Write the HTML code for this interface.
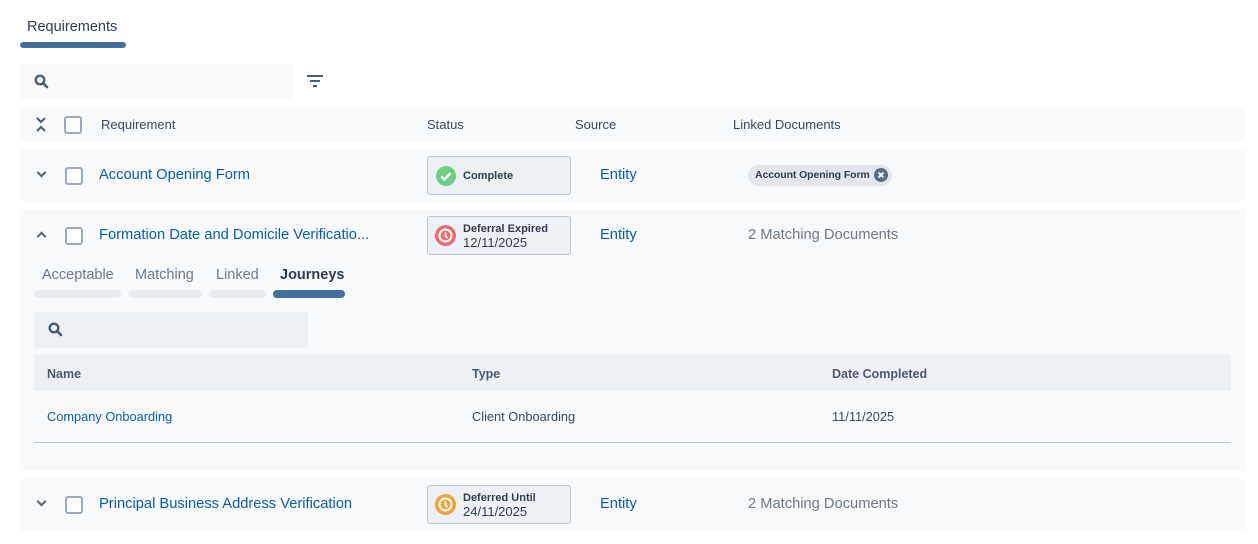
<!DOCTYPE html>
<html><head><style>
*{box-sizing:border-box;margin:0;padding:0}
body{width:1258px;height:544px;background:#fff;font-family:"Liberation Sans",sans-serif;position:relative;overflow:hidden;color:#3a4a5c}
.a{position:absolute}
.bg{background:#f7f9fb}
.link{color:#0a5cb0}
.cb{position:absolute;width:18px;height:18px;border:2px solid #9aaabb;border-radius:3px;background:#fff}
.st{position:absolute;left:427px;width:144px;height:39px;background:#edf1f5;border:1px solid #b9c6d4;border-radius:3px}
.chev{position:absolute;width:7px;height:7px;border-right:2px solid #556677;border-bottom:2px solid #556677}
</style></head><body>
<div class="a" style="left:27px;top:19px;font-size:14.5px;color:#2e3e50">Requirements</div>
<div class="a" style="left:20px;top:42px;width:106px;height:6px;border-radius:3px;background:#44709f"></div>

<div class="a bg" style="left:20px;top:64px;width:273px;height:35px;border-radius:3px"></div>
<svg class="a" style="left:34px;top:74px" width="15" height="15" viewBox="0 0 15 15"><circle cx="6" cy="6" r="4.3" fill="none" stroke="#485e78" stroke-width="2.4"/><path d="M9 9l4 4" stroke="#485e78" stroke-width="2.6" stroke-linecap="round"/></svg>
<svg class="a" style="left:306px;top:74px" width="18" height="14"><path d="M1 2h16M4 7h10M7 12h4" stroke="#485e78" stroke-width="2"/></svg>

<div class="a bg" style="left:20px;top:107px;width:1225px;height:35px;border-radius:3px"></div>
<svg class="a" style="left:35px;top:117px" width="12" height="16"><path d="M2 1l4 4 4-4M2 14l4-4 4 4" fill="none" stroke="#485e78" stroke-width="2"/></svg>
<div class="cb" style="left:64px;top:116px"></div>
<div class="a" style="left:101px;top:117px;font-size:13px">Requirement</div>
<div class="a" style="left:427px;top:117px;font-size:13px">Status</div>
<div class="a" style="left:575px;top:117px;font-size:13px">Source</div>
<div class="a" style="left:733px;top:117px;font-size:13px">Linked Documents</div>

<!-- row1 -->
<div class="a bg" style="left:20px;top:150px;width:1225px;height:51px"></div>
<div class="chev" style="left:38px;top:169px;transform:rotate(45deg)"></div>
<div class="cb" style="left:65px;top:167px"></div>
<div class="a link" style="left:99px;top:167px;font-size:14.7px">Account Opening Form</div>
<div class="st" style="top:156px"></div>
<svg class="a" style="left:436px;top:166px" width="20" height="20"><circle cx="10" cy="10" r="10" fill="#6dcf84"/><path d="M5.5 10.5l3 3 6-6.5" fill="none" stroke="#fff" stroke-width="2.4"/></svg>
<div class="a" style="left:463px;top:170px;font-size:11px;font-weight:bold;color:#2e3e50">Complete</div>
<div class="a link" style="left:600px;top:167px;font-size:14.7px">Entity</div>
<div class="a" style="left:748px;top:165px;width:144px;height:21px;border-radius:11px;background:#e3e7ed"></div>
<div class="a" style="left:755px;top:169px;font-size:10.5px;color:#2e3e50;font-weight:bold;letter-spacing:-0.1px">Account Opening Form</div>
<svg class="a" style="left:874px;top:168px" width="14" height="14"><circle cx="7" cy="7" r="7" fill="#5a6b82"/><path d="M4.5 4.5l5 5M9.5 4.5l-5 5" stroke="#fff" stroke-width="1.8"/></svg>

<!-- row2 -->
<div class="a bg" style="left:20px;top:209px;width:1225px;height:262px"></div>
<div class="chev" style="left:38px;top:233px;transform:rotate(225deg)"></div>
<div class="cb" style="left:65px;top:227px"></div>
<div class="a link" style="left:99px;top:227px;font-size:14.7px">Formation Date and Domicile Verificatio...</div>
<div class="st" style="top:216px"></div>
<svg class="a" style="left:435px;top:225px" width="21" height="21"><circle cx="10.5" cy="10.5" r="10.5" fill="#ee6b6b"/><circle cx="10.5" cy="10.5" r="6" fill="none" stroke="#fff" stroke-width="2"/><path d="M10.5 7v4l2 2" fill="none" stroke="#fff" stroke-width="1.8"/></svg>
<div class="a" style="left:463px;top:223px;font-size:11px;font-weight:bold;color:#2e3e50">Deferral Expired</div>
<div class="a" style="left:463px;top:235px;font-size:13px;color:#2e3e50">12/11/2025</div>
<div class="a link" style="left:600px;top:227px;font-size:14.7px">Entity</div>
<div class="a" style="left:748px;top:227px;font-size:14.7px;color:#6a7a8c">2 Matching Documents</div>

<div class="a" style="left:42px;top:267px;font-size:14.5px;color:#6a7a8c">Acceptable</div>
<div class="a" style="left:135px;top:267px;font-size:14.5px;color:#6a7a8c">Matching</div>
<div class="a" style="left:216px;top:267px;font-size:14.5px;color:#6a7a8c">Linked</div>
<div class="a" style="left:280px;top:267px;font-size:14.5px;font-weight:bold;color:#2e3e50">Journeys</div>
<div class="a" style="left:34px;top:290px;width:87px;height:8px;border-radius:4px;background:#e8edf2"></div>
<div class="a" style="left:128px;top:290px;width:74px;height:8px;border-radius:4px;background:#e8edf2"></div>
<div class="a" style="left:209px;top:290px;width:57px;height:8px;border-radius:4px;background:#e8edf2"></div>
<div class="a" style="left:273px;top:290px;width:72px;height:8px;border-radius:4px;background:#44709f"></div>

<div class="a" style="left:34px;top:312px;width:274px;height:36px;border-radius:3px;background:#edf1f5"></div>
<svg class="a" style="left:48px;top:322px" width="15" height="15" viewBox="0 0 15 15"><circle cx="6" cy="6" r="4.3" fill="none" stroke="#485e78" stroke-width="2.4"/><path d="M9 9l4 4" stroke="#485e78" stroke-width="2.6" stroke-linecap="round"/></svg>
<div class="a" style="left:34px;top:355px;width:1197px;height:36px;background:#edf1f5"></div>
<div class="a" style="left:47px;top:367px;font-size:12.5px;font-weight:bold;color:#4a5a6e">Name</div>
<div class="a" style="left:472px;top:367px;font-size:12.5px;font-weight:bold;color:#4a5a6e">Type</div>
<div class="a" style="left:832px;top:367px;font-size:12.5px;font-weight:bold;color:#4a5a6e">Date Completed</div>
<div class="a link" style="left:47px;top:409px;font-size:12.8px">Company Onboarding</div>
<div class="a" style="left:472px;top:409px;font-size:12.8px;color:#3a4a5c">Client Onboarding</div>
<div class="a" style="left:832px;top:409px;font-size:12.8px;color:#3a4a5c">11/11/2025</div>
<div class="a" style="left:34px;top:442px;width:1197px;height:1px;background:#b9c6d4"></div>

<!-- row3 -->
<div class="a bg" style="left:20px;top:479px;width:1225px;height:51px"></div>
<div class="chev" style="left:38px;top:498px;transform:rotate(45deg)"></div>
<div class="cb" style="left:65px;top:496px"></div>
<div class="a link" style="left:99px;top:496px;font-size:14.7px">Principal Business Address Verification</div>
<div class="st" style="top:485px"></div>
<svg class="a" style="left:435px;top:494px" width="21" height="21"><circle cx="10.5" cy="10.5" r="10.5" fill="#f5a03a"/><circle cx="10.5" cy="10.5" r="6" fill="none" stroke="#fff" stroke-width="2"/><path d="M10.5 7v4l2 2" fill="none" stroke="#fff" stroke-width="1.8"/></svg>
<div class="a" style="left:463px;top:492px;font-size:11px;font-weight:bold;color:#2e3e50">Deferred Until</div>
<div class="a" style="left:463px;top:504px;font-size:13px;color:#2e3e50">24/11/2025</div>
<div class="a link" style="left:600px;top:496px;font-size:14.7px">Entity</div>
<div class="a" style="left:748px;top:496px;font-size:14.7px;color:#6a7a8c">2 Matching Documents</div>
</body></html>
